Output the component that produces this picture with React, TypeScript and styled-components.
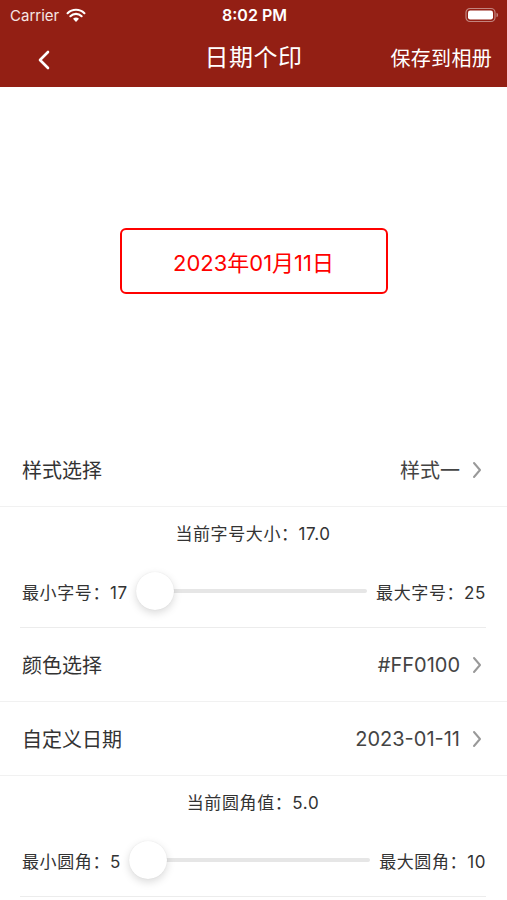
import React from 'react';
import styled, { createGlobalStyle } from 'styled-components';

const GlobalStyle = createGlobalStyle`
  body {
    margin: 0;
    background: #fff;
    font-family: Inter, "Noto Sans CJK SC", sans-serif;
    color: #333;
  }
`;

const Page = styled.div`
  width: 507px;
  min-height: 900px;
  display: flex;
  flex-direction: column;
  background: #fff;
`;

const Header = styled.div`
  background-color: #931f14;
  color: #fff;
`;

const StatusBar = styled.div`
  height: 30px;
  display: grid;
  grid-template-columns: 1fr auto 1fr;
  align-items: center;
  padding: 0 8px 0 10px;
  font-size: 15px;
`;

const Carrier = styled.div`
  display: flex;
  align-items: center;
  gap: 7px;
  color: #f6e6e4;
`;

const Clock = styled.div`
  font-weight: 600;
  font-size: 16px;
`;

const Battery = styled.div`
  justify-self: end;
  display: flex;
  align-items: center;
`;

const NavBar = styled.div`
  height: 57px;
  display: grid;
  grid-template-columns: 1fr auto 1fr;
  align-items: center;
  padding: 0 15px;
  line-height: 1;
`;

const BackButton = styled.div`
  display: flex;
  align-items: center;
  padding: 3px 0 0 22px;
`;

const Title = styled.div`
  font-size: 24px;
  font-weight: 400;
  letter-spacing: 0.5px;
  margin-bottom: 2px;
`;

const SaveButton = styled.div`
  justify-self: end;
  font-size: 20px;
  letter-spacing: 0.3px;
`;

const Preview = styled.div`
  height: 346px;
  display: flex;
  align-items: center;
  justify-content: center;
`;

const Stamp = styled.div`
  width: 264px;
  height: 62px;
  border: 2px solid #ff0100;
  border-radius: 6px;
  display: flex;
  align-items: center;
  justify-content: center;
  color: #ff0100;
  font-size: 22px;
  margin-top: 2px;
`;

const Row = styled.div`
  height: 73px;
  display: flex;
  align-items: center;
  justify-content: space-between;
  padding: 0 25px 0 22px;
  border-bottom: 1px solid #f1f1f1;
  font-size: 20px;
`;

const Value = styled.div`
  display: flex;
  align-items: center;
  gap: 12px;
  color: #444;
`;

const SliderBlock = styled.div`
  display: flex;
  flex-direction: column;
  align-items: center;
  margin: 0 21px 0 20px;
  padding: 17px 0;
  border-bottom: 1px solid #ececec;
`;

const Caption = styled.div`
  font-size: 17px;
  line-height: 20px;
  letter-spacing: 0.6px;
  color: #333;
`;

const SliderRow = styled.div`
  align-self: stretch;
  height: 38px;
  margin-top: 28px;
  display: flex;
  align-items: center;
  padding-left: 2px;
  font-size: 17px;
  letter-spacing: 0.6px;
`;

const Track = styled.div<{ $gap: number }>`
  flex: 1;
  position: relative;
  height: 38px;
  margin: 0 9px 0 ${(p) => p.$gap}px;

  &::before {
    content: '';
    position: absolute;
    left: 0;
    right: 0;
    top: 17px;
    height: 4px;
    border-radius: 2px;
    background: #e6e6e6;
  }
`;

const Thumb = styled.div`
  position: absolute;
  top: 0;
  width: 38px;
  height: 38px;
  border-radius: 50%;
  background: #fff;
  box-shadow: 0 3px 8px rgba(0, 0, 0, 0.15), 0 0 1px rgba(0, 0, 0, 0.1);
`;

function Chevron({ color, w, h, sw }: { color: string; w: number; h: number; sw: number }) {
  return (
    <svg width={w} height={h} viewBox={`0 0 ${w} ${h}`} fill="none">
      <path
        d={`M${sw} ${sw} L${w - sw} ${h / 2} L${sw} ${h - sw}`}
        stroke={color}
        strokeWidth={sw}
        strokeLinecap="round"
        strokeLinejoin="round"
      />
    </svg>
  );
}

function Slider({ min, max, value, gap }: { min: number; max: number; value: number; gap: number }) {
  const pct = (value - min) / (max - min);
  return (
    <Track $gap={gap}>
      <Thumb style={{ left: `calc(${pct} * (100% - 38px))` }} />
    </Track>
  );
}

export default function App() {
  return (
    <Page>
      <GlobalStyle />
      <Header>
        <StatusBar>
          <Carrier>
            Carrier
            <svg width="20" height="15" viewBox="0 0 20 15">
              <path d="M10 14 L7 10.8 A4.4 4.4 0 0 1 13 10.8 Z" fill="#fff" />
              <path d="M4.4 8.2 A8 8 0 0 1 15.6 8.2" stroke="#fff" strokeWidth="2.2" fill="none" strokeLinecap="round" />
              <path d="M1.6 5.2 A12 12 0 0 1 18.4 5.2" stroke="#fff" strokeWidth="2.2" fill="none" strokeLinecap="round" />
            </svg>
          </Carrier>
          <Clock>8:02 PM</Clock>
          <Battery>
            <svg width="34" height="16" viewBox="0 0 34 16">
              <rect x="1" y="1.5" width="29" height="13" rx="4" fill="none" stroke="rgba(255,255,255,0.45)" strokeWidth="1.2" />
              <rect x="3" y="3.5" width="25" height="9" rx="2.2" fill="#fff" />
              <path d="M31.5 5.8 A2.3 2.3 0 0 1 31.5 10.2 Z" fill="rgba(255,255,255,0.45)" />
            </svg>
          </Battery>
        </StatusBar>
        <NavBar>
          <BackButton>
            <svg width="14" height="20" viewBox="0 0 14 20" fill="none">
              <path d="M11 2 L3 10 L11 18" stroke="#fff" strokeWidth="2.6" strokeLinecap="round" strokeLinejoin="round" />
            </svg>
          </BackButton>
          <Title>日期个印</Title>
          <SaveButton>保存到相册</SaveButton>
        </NavBar>
      </Header>

      <Preview>
        <Stamp>2023年01月11日</Stamp>
      </Preview>

      <Row>
        <span>样式选择</span>
        <Value>
          样式一
          <Chevron color="#999" w={10} h={18} sw={2} />
        </Value>
      </Row>

      <SliderBlock>
        <Caption>当前字号大小：17.0</Caption>
        <SliderRow>
          <span>最小字号：17</span>
          <Slider min={17} max={25} value={17} gap={8} />
          <span>最大字号：25</span>
        </SliderRow>
      </SliderBlock>

      <Row>
        <span>颜色选择</span>
        <Value>
          #FF0100
          <Chevron color="#999" w={10} h={18} sw={2} />
        </Value>
      </Row>

      <Row>
        <span>自定义日期</span>
        <Value>
          2023-01-11
          <Chevron color="#999" w={10} h={18} sw={2} />
        </Value>
      </Row>

      <SliderBlock>
        <Caption>当前圆角值：5.0</Caption>
        <SliderRow>
          <span>最小圆角：5</span>
          <Slider min={5} max={10} value={5} gap={8} />
          <span>最大圆角：10</span>
        </SliderRow>
      </SliderBlock>
    </Page>
  );
}
